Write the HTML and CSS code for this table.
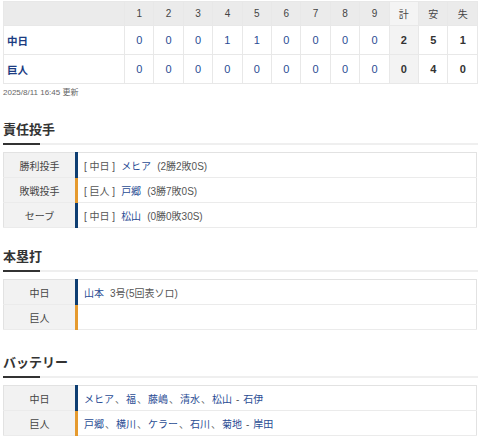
FILE: index.html
```html
<!DOCTYPE html>
<html lang="ja">
<head>
<meta charset="utf-8">
<link rel="stylesheet" href="styles.css">
</head>
<body>
<div class="wrap">
  <table class="score">
    <thead>
      <tr>
        <th class="team"></th>
        <th>1</th><th>2</th><th>3</th><th>4</th><th>5</th><th>6</th><th>7</th><th>8</th><th>9</th>
        <th class="total">計</th><th>安</th><th>失</th>
      </tr>
    </thead>
    <tbody>
      <tr>
        <td class="team">中日</td>
        <td class="inn">0</td><td class="inn">0</td><td class="inn">0</td><td class="inn">1</td><td class="inn">1</td><td class="inn">0</td><td class="inn">0</td><td class="inn">0</td><td class="inn">0</td>
        <td class="sum total">2</td><td class="sum">5</td><td class="sum">1</td>
      </tr>
      <tr>
        <td class="team">巨人</td>
        <td class="inn">0</td><td class="inn">0</td><td class="inn">0</td><td class="inn">0</td><td class="inn">0</td><td class="inn">0</td><td class="inn">0</td><td class="inn">0</td><td class="inn">0</td>
        <td class="sum total">0</td><td class="sum">4</td><td class="sum">0</td>
      </tr>
    </tbody>
  </table>
  <p class="updated">2025/8/11 16:45 更新</p>

  <section class="sec first">
    <h2 class="sec-title">責任投手</h2>
    <table class="info">
      <tr><th>勝利投手</th><td class="d"><span class="tm">[ 中日 ]</span><a class="pl">メヒア</a><span class="rec">(2勝2敗0S)</span></td></tr>
      <tr><th>敗戦投手</th><td class="g"><span class="tm">[ 巨人 ]</span><a class="pl">戸郷</a><span class="rec">(3勝7敗0S)</span></td></tr>
      <tr><th>セーブ</th><td class="d"><span class="tm">[ 中日 ]</span><a class="pl">松山</a><span class="rec">(0勝0敗30S)</span></td></tr>
    </table>
  </section>

  <section class="sec">
    <h2 class="sec-title">本塁打</h2>
    <table class="info">
      <tr><th>中日</th><td class="d"><a class="pl">山本</a><span class="rec">3号(5回表ソロ)</span></td></tr>
      <tr><th>巨人</th><td class="g"></td></tr>
    </table>
  </section>

  <section class="sec last">
    <h2 class="sec-title">バッテリー</h2>
    <table class="info">
      <tr><th>中日</th><td class="d"><a class="pl">メヒア</a><span class="sep">、</span><a class="pl">福</a><span class="sep">、</span><a class="pl">藤嶋</a><span class="sep">、</span><a class="pl">清水</a><span class="sep">、</span><a class="pl">松山</a><span class="dash">-</span><a class="pl">石伊</a></td></tr>
      <tr><th>巨人</th><td class="g"><a class="pl">戸郷</a><span class="sep">、</span><a class="pl">横川</a><span class="sep">、</span><a class="pl">ケラー</a><span class="sep">、</span><a class="pl">石川</a><span class="sep">、</span><a class="pl">菊地</a><span class="dash">-</span><a class="pl">岸田</a></td></tr>
    </table>
  </section>
</div>
</body>
</html>
```

FILE: styles.css
```css
* { box-sizing: border-box; }
html, body { margin: 0; padding: 0; background: #fff; }
body {
  font-family: "Liberation Sans", "Noto Sans CJK JP", sans-serif;
  color: #333;
}
.wrap { padding: 1px 2px 0 3px; }

.score {
  width: 475px;
  border-collapse: collapse;
  table-layout: fixed;
}
.score th, .score td {
  border: 1px solid #e8e8e8;
  text-align: center;
  padding: 0;
}
.score th {
  background: #ebebeb;
  height: 24px;
  font-size: 10px;
  font-weight: normal;
  color: #444;
}
.score th.team { width: 121px; }
.score td { height: 29px; font-size: 11px; }
.score td.team {
  text-align: left;
  padding-left: 3px;
  font-weight: bold;
  color: #1c3c82;
  font-size: 10.5px;
}
.score td.inn { color: #2a4c94; }
.score td.sum { font-weight: bold; color: #333; }
.score .total { background: #f3f3f3; }
.score th.total { background: #f4f4f4; }

.updated {
  margin: 0;
  padding-top: 3px;
  font-size: 8px;
  line-height: 12px;
  color: #666;
  margin-bottom: 22px;
}

.sec { margin-top: 20px; }
.sec.first { margin-top: 0; }
.sec.last { margin-top: 24px; }
.sec-title {
  margin: 0 0 7px;
  font-size: 13px;
  line-height: 18px;
  font-weight: bold;
  color: #333;
  padding-bottom: 6px;
  background:
    linear-gradient(#333, #333) left bottom / 37px 2px no-repeat,
    linear-gradient(#efefef, #efefef) left bottom / 100% 2px no-repeat;
}

.info {
  width: 474px;
  border-collapse: collapse;
  border: 1px solid #e2e2e2;
}
.info th, .info td {
  height: 25px;
  font-size: 10px;
  border-bottom: 1px solid #ebebeb;
  padding: 0;
}
.info th {
  width: 73px;
  background: #f2f2f2;
  font-weight: normal;
  color: #444;
  text-align: center;
}
.info td {
  padding-left: 6px;
  color: #555;
  border-left: 3px solid #0e3e72;
}
.info td.g { border-left-color: #e59a2e; }
.tm { margin-right: 6px; color: #555; }
.pl { color: #2a4c94; text-decoration: none; }
.rec { margin-left: 6px; color: #555; }
.sep { margin: 0 1px; color: #666; }
.dash { margin: 0 4px; color: #555; }
```
